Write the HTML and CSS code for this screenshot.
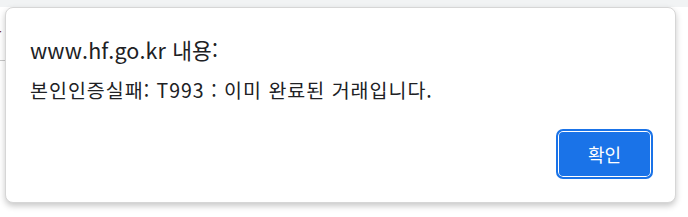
FILE: index.html
```html
<!DOCTYPE html>
<html lang="ko">
<head>
    <meta charset="UTF-8">
    <title>www.hf.go.kr 내용</title>
    <link rel="stylesheet" href="styles.css">
</head>
<body>
    <div class="page">
        <div class="tabstrip"></div>
        <div class="content">
            <span class="letter">r</span>
            <div class="rule"></div>
        </div>
    </div>
    <div class="dialog">
        <div class="title">www.hf.go.kr 내용:</div>
        <div class="message">본인인증실패: T993 : 이미 완료된 거래입니다.</div>
        <div class="actions">
            <button class="ok">확인</button>
        </div>
    </div>
</body>
</html>
```

FILE: styles.css
```css
body {
    margin: 0;
    width: 688px;
    height: 217px;
    overflow: hidden;
    background: #ffffff;
    font-family: "Noto Sans CJK KR", "Noto Sans", sans-serif;
    position: relative;
}
.tabstrip {
    height: 7px;
    background: #f1f3f4;
}
.content {
    padding-top: 18px;
}
.letter {
    display: block;
    margin-left: -4px;
    font-size: 16px;
    line-height: 20px;
    color: #7a2a2a;
    font-family: "Liberation Sans", sans-serif;
}
.rule {
    margin-top: 15px;
    width: 10px;
    height: 1px;
    background: #c8c8c8;
}
.dialog {
    position: absolute;
    left: 5px;
    top: 7px;
    width: 671px;
    height: 196px;
    background: #ffffff;
    border: 1px solid #d6d6d6;
    border-radius: 8px;
    box-shadow: 0 3px 6px rgba(0, 0, 0, 0.22);
    box-sizing: border-box;
    padding: 28px 24px 0 24px;
}
.title {
    font-size: 21.5px;
    line-height: 28px;
    color: #202124;
    letter-spacing: 0.1px;
}
.message {
    margin-top: 14px;
    font-size: 19.5px;
    line-height: 24px;
    letter-spacing: 1px;
    color: #202124;
}
.actions {
    display: flex;
    justify-content: flex-end;
    margin-top: 27px;
}
.ok {
    width: 97px;
    height: 50px;
    border: 2px solid #1a73e8;
    border-radius: 7px;
    background: #1a73e8;
    box-shadow: inset 0 0 0 1px #ffffff;
    color: #ffffff;
    font-family: "Noto Sans CJK KR", sans-serif;
    font-size: 18px;
    padding: 0;
    margin-right: -2px;
}
```
